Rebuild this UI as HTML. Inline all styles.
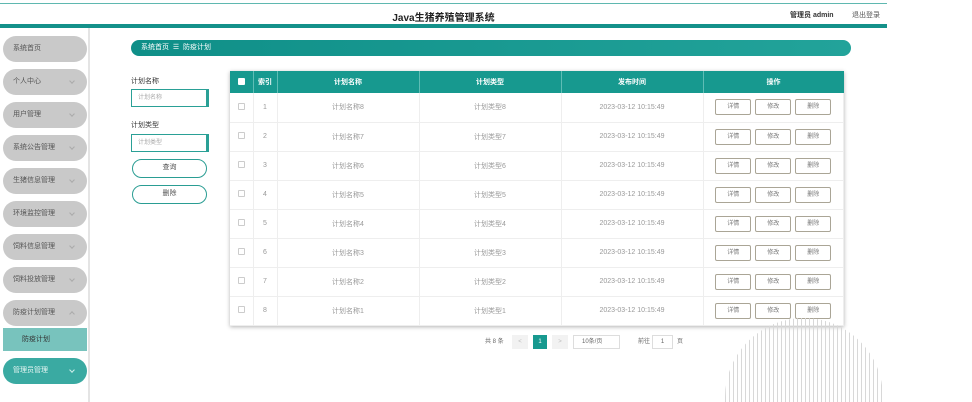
<!DOCTYPE html>
<html><head><meta charset="utf-8"><style>
*{box-sizing:border-box;margin:0;padding:0}
body{width:972px;height:402px;overflow:hidden;background:#fff;font-family:"Liberation Sans","Noto Sans CJK SC",sans-serif;position:relative;color:#555}
.abs{position:absolute}
.topline{left:0;top:3px;width:887px;height:1px;background:#5fb8b0}
.title{left:0;width:887px;top:9px;text-align:center;font-size:10px;font-weight:bold;color:#222}
.bar{left:0;top:24px;width:887px;height:4px;background:#14918a}
.side{left:88px;top:28px;width:2px;height:374px;background:#e4e4e4}
.pill{left:3px;width:84px;height:26px;border-radius:13px;background:#c9c9c9;font-size:7px;color:#555;padding-left:10px;line-height:26px}
.pill span{position:absolute;right:13px;top:10px;width:4px;height:4px;border-right:1px solid #aaa;border-bottom:1px solid #aaa;transform:rotate(45deg)}
.pill span.up{top:12px;transform:rotate(-135deg)}
.sub{left:3px;top:328px;width:84px;height:23px;background:#78c3bd;font-size:7px;color:#333;line-height:23px;padding-left:19px}
.crumb{left:131px;top:40px;width:720px;height:16px;border-radius:8px;background:linear-gradient(90deg,#0f8f88,#22a39a);color:#fff;font-size:7px;line-height:16px;padding-left:10px}
.lbl{font-size:7px;color:#333}
.inp{left:131px;width:78px;height:18px;border:1px solid #2aa096;border-right:3px solid #2aa096;font-size:6px;color:#aaa;padding-left:6px;line-height:16px}
.btn{left:132px;width:75px;height:19px;border:1.5px solid #2a9d93;border-radius:10px;font-size:7px;color:#555;text-align:center;line-height:16px}
table{position:absolute;left:230px;top:71px;width:614px;border-collapse:collapse;box-shadow:0 1px 4px rgba(0,0,0,.3);font-size:7px}
th{background:#17998f;color:#fff;height:22px;font-weight:bold;border-right:1px solid #5fbdb5}
td{height:29px;text-align:center;border-right:1px solid #eee;border-bottom:1px solid #eee;color:#999}
.cb{display:inline-block;width:7px;height:7px;border:1px solid #ccc;border-radius:1px}
th .cb{background:#fff;border-color:#fff}
.ob{display:inline-block;width:36px;height:16px;border:1px solid #aaa596;border-radius:2px;line-height:14px;margin:0 2px;color:#777;font-size:6px}
.pg{font-size:6px;color:#666;top:335px;height:14px;line-height:14px}
.stripes{left:725px;top:318px;width:158px;height:84px;background:repeating-linear-gradient(90deg,#d8d8d8 0 1px,transparent 1px 4px);border-radius:79px 79px 0 0}
</style></head><body>
<div class="abs topline"></div>
<div class="abs title">Java生猪养殖管理系统</div>
<div class="abs" style="left:790px;top:10px;font-size:7px;font-weight:bold;color:#333">管理员 admin</div>
<div class="abs" style="left:852px;top:10px;font-size:7px;color:#555">退出登录</div>
<div class="abs bar"></div>
<div class="abs side"></div>
<div class="abs pill" style="top:36px">系统首页</div>
<div class="abs pill" style="top:69px">个人中心<span></span></div>
<div class="abs pill" style="top:102px">用户管理<span></span></div>
<div class="abs pill" style="top:135px">系统公告管理<span></span></div>
<div class="abs pill" style="top:168px">生猪信息管理<span></span></div>
<div class="abs pill" style="top:201px">环境监控管理<span></span></div>
<div class="abs pill" style="top:234px">饲料信息管理<span></span></div>
<div class="abs pill" style="top:267px">饲料投放管理<span></span></div>
<div class="abs pill" style="top:300px">防疫计划管理<span class="up"></span></div>
<div class="abs sub">防疫计划</div>
<div class="abs pill" style="top:358px;background:#3aaaa2;color:#e8f6f4">管理员管理<span style="border-color:#cfeeea"></span></div>
<div class="abs crumb">系统首页 &nbsp;☰&nbsp; 防疫计划</div>
<div class="abs lbl" style="left:131px;top:76px">计划名称</div>
<div class="abs inp" style="top:89px">计划名称</div>
<div class="abs lbl" style="left:131px;top:120px">计划类型</div>
<div class="abs inp" style="top:134px">计划类型</div>
<div class="abs btn" style="top:159px">查询</div>
<div class="abs btn" style="top:185px">删除</div>
<table>
<tr><th style="width:23px"><span class="cb"></span></th><th style="width:24px">索引</th><th style="width:142px">计划名称</th><th style="width:142px">计划类型</th><th style="width:142px">发布时间</th><th style="border-right:none">操作</th></tr>
<tr><td><span class="cb"></span></td><td>1</td><td>计划名称8</td><td>计划类型8</td><td>2023-03-12 10:15:49</td><td><span class="ob">详情</span><span class="ob">修改</span><span class="ob">删除</span></td></tr>
<tr><td><span class="cb"></span></td><td>2</td><td>计划名称7</td><td>计划类型7</td><td>2023-03-12 10:15:49</td><td><span class="ob">详情</span><span class="ob">修改</span><span class="ob">删除</span></td></tr>
<tr><td><span class="cb"></span></td><td>3</td><td>计划名称6</td><td>计划类型6</td><td>2023-03-12 10:15:49</td><td><span class="ob">详情</span><span class="ob">修改</span><span class="ob">删除</span></td></tr>
<tr><td><span class="cb"></span></td><td>4</td><td>计划名称5</td><td>计划类型5</td><td>2023-03-12 10:15:49</td><td><span class="ob">详情</span><span class="ob">修改</span><span class="ob">删除</span></td></tr>
<tr><td><span class="cb"></span></td><td>5</td><td>计划名称4</td><td>计划类型4</td><td>2023-03-12 10:15:49</td><td><span class="ob">详情</span><span class="ob">修改</span><span class="ob">删除</span></td></tr>
<tr><td><span class="cb"></span></td><td>6</td><td>计划名称3</td><td>计划类型3</td><td>2023-03-12 10:15:49</td><td><span class="ob">详情</span><span class="ob">修改</span><span class="ob">删除</span></td></tr>
<tr><td><span class="cb"></span></td><td>7</td><td>计划名称2</td><td>计划类型2</td><td>2023-03-12 10:15:49</td><td><span class="ob">详情</span><span class="ob">修改</span><span class="ob">删除</span></td></tr>
<tr><td><span class="cb"></span></td><td>8</td><td>计划名称1</td><td>计划类型1</td><td>2023-03-12 10:15:49</td><td><span class="ob">详情</span><span class="ob">修改</span><span class="ob">删除</span></td></tr>
</table>
<div class="abs stripes"></div>
<div class="abs pg" style="left:485px">共 8 条</div>
<div class="abs pg" style="left:512px;width:16px;background:#f2f2f2;text-align:center;color:#bbb">&lt;</div>
<div class="abs pg" style="left:533px;width:14px;background:#17998f;color:#fff;text-align:center">1</div>
<div class="abs pg" style="left:552px;width:16px;background:#f2f2f2;text-align:center;color:#bbb">&gt;</div>
<div class="abs pg" style="left:573px;width:47px;border:1px solid #ddd;padding-left:8px;line-height:12px">10条/页</div>
<div class="abs pg" style="left:638px">前往</div>
<div class="abs pg" style="left:652px;width:21px;border:1px solid #ddd;text-align:center;line-height:12px">1</div>
<div class="abs pg" style="left:677px">页</div>
</body></html>
